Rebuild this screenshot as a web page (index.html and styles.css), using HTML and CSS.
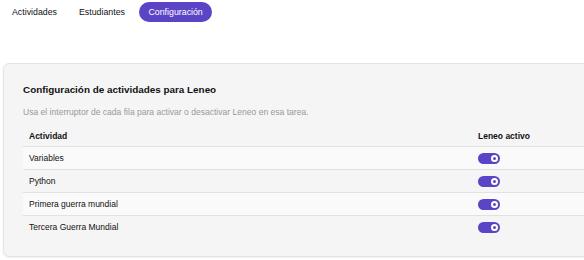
FILE: index.html
```html
<!DOCTYPE html>
<html lang="es">
<head>
<meta charset="utf-8">
<link rel="stylesheet" href="styles.css">
</head>
<body>
<nav class="tabs">
  <a class="tab">Actividades</a>
  <a class="tab">Estudiantes</a>
  <a class="tab active">Configuración</a>
</nav>
<section class="card">
  <h2 class="title">Configuración de actividades para Leneo</h2>
  <p class="hint">Usa el interruptor de cada fila para activar o desactivar Leneo en esa tarea.</p>
  <table class="grid">
    <thead>
      <tr><th class="c-name">Actividad</th><th class="c-on">Leneo activo</th></tr>
    </thead>
    <tbody>
      <tr><td>Variables</td><td><span class="switch"><span class="knob"></span></span></td></tr>
      <tr><td>Python</td><td><span class="switch"><span class="knob"></span></span></td></tr>
      <tr><td>Primera guerra mundial</td><td><span class="switch"><span class="knob"></span></span></td></tr>
      <tr><td>Tercera Guerra Mundial</td><td><span class="switch"><span class="knob"></span></span></td></tr>
    </tbody>
  </table>
</section>
</body>
</html>
```
FILE: styles.css
```css
html, body {
  margin: 0;
  padding: 0;
  background: #ffffff;
  font-family: "Liberation Sans", Arial, sans-serif;
  color: #111;
  overflow: hidden;
}
body {
  width: 584px;
  height: 260px;
}
.tabs {
  display: flex;
  align-items: center;
  padding: 2px 0 0 4px;
  height: 20px;
}
.tab {
  font-size: 8.8px;
  line-height: 20px;
  padding: 0 8px;
  margin-right: 6px;
  color: #111;
  border-radius: 10px;
}
.tab.active {
  background: #5b45c6;
  color: #fff;
  padding: 0 9.5px;
}
.card {
  margin: 41px 0 0 3px;
  width: 590px;
  height: 194px;
  box-sizing: border-box;
  background: #f5f5f5;
  border: 1px solid #e4e4e4;
  border-radius: 6px;
  padding: 16px 0 0 19px;
  box-shadow: 0 1px 2px rgba(0,0,0,0.06);
}
.title {
  margin: 0;
  font-size: 9.9px;
  font-weight: 700;
  line-height: 20px;
  color: #111;
}
.hint {
  margin: 6px 0 0;
  font-size: 8.55px;
  line-height: 12px;
  color: #999;
}
.grid {
  margin-top: 7px;
  width: 570px;
  border-collapse: collapse;
  font-size: 8.5px;
}
.grid th {
  text-align: left;
  font-weight: 700;
  height: 21px;
  padding: 0 6px;
  border-bottom: 1px solid #e2e2e2;
}
.grid th.c-name { width: 437px; }
.grid td {
  height: 22px;
  padding: 0 6px;
  border-bottom: 1px solid #e2e2e2;
  vertical-align: middle;
}
.grid tbody tr:nth-child(odd) { background: #fafafb; }
.grid tbody tr:last-child td { border-bottom: none; }
.switch {
  display: flex;
  align-items: center;
  justify-content: flex-end;
  width: 22px;
  height: 11px;
  box-sizing: border-box;
  padding: 0 2px;
  border-radius: 6px;
  background: #5b45c6;
}
.knob {
  width: 7px;
  height: 7px;
  box-sizing: border-box;
  border-radius: 50%;
  border: 2.2px solid #fff;
  background: #5b45c6;
}
```
